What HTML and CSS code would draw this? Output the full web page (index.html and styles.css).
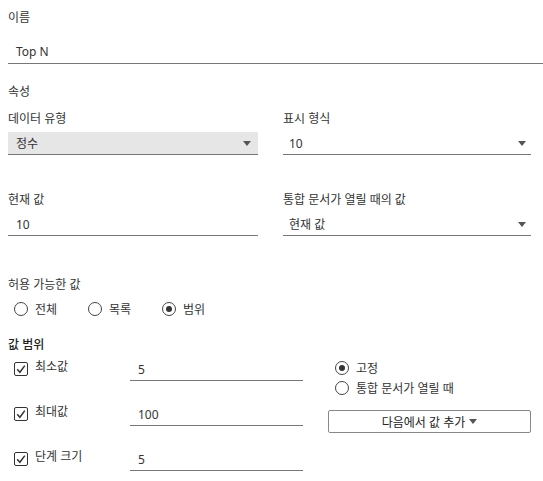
FILE: index.html
```html
<!DOCTYPE html>
<html lang="ko">
<head>
<meta charset="utf-8">
<link rel="stylesheet" href="styles.css">
</head>
<body>
<div class="page">
  <div class="label">이름</div>
  <div class="name-field">Top N</div>

  <div class="label heading">속성</div>
  <div class="grid2 row1">
    <div class="col">
      <div class="label">데이터 유형</div>
      <div class="select grey"><span>정수</span><i class="caret"></i></div>
    </div>
    <div class="col">
      <div class="label">표시 형식</div>
      <div class="select right"><span>10</span><i class="caret"></i></div>
    </div>
  </div>
  <div class="grid2 row2">
    <div class="col">
      <div class="label">현재 값</div>
      <div class="select"><span>10</span></div>
    </div>
    <div class="col">
      <div class="label">통합 문서가 열릴 때의 값</div>
      <div class="select right"><span>현재 값</span><i class="caret"></i></div>
    </div>
  </div>

  <div class="label allowed">허용 가능한 값</div>
  <div class="radios">
    <div class="radio-item"><span class="radio"></span><span>전체</span></div>
    <div class="radio-item"><span class="radio"></span><span>목록</span></div>
    <div class="radio-item"><span class="radio on"></span><span>범위</span></div>
  </div>

  <div class="label range-title">값 범위</div>
  <div class="range">
    <div class="range-left">
      <div class="range-row">
        <div class="check-label"><span class="checkbox"><svg width="14" height="14" viewBox="0 0 14 14"><path d="M3.2 7.2 L5.9 10.2 L10.8 3.6" fill="none" stroke="#333" stroke-width="1.5"/></svg></span><span>최소값</span></div>
        <div class="range-field">5</div>
      </div>
      <div class="range-row">
        <div class="check-label"><span class="checkbox"><svg width="14" height="14" viewBox="0 0 14 14"><path d="M3.2 7.2 L5.9 10.2 L10.8 3.6" fill="none" stroke="#333" stroke-width="1.5"/></svg></span><span>최대값</span></div>
        <div class="range-field">100</div>
      </div>
      <div class="range-row last">
        <div class="check-label"><span class="checkbox"><svg width="14" height="14" viewBox="0 0 14 14"><path d="M3.2 7.2 L5.9 10.2 L10.8 3.6" fill="none" stroke="#333" stroke-width="1.5"/></svg></span><span>단계 크기</span></div>
        <div class="range-field">5</div>
      </div>
    </div>
    <div class="range-right">
      <div class="radio-item small"><span class="radio on"></span><span>고정</span></div>
      <div class="radio-item small second"><span class="radio"></span><span>통합 문서가 열릴 때</span></div>
      <div class="button">다음에서 값 추가 <i class="caret inline"></i></div>
    </div>
  </div>
</div>
</body>
</html>
```

FILE: styles.css
```css
html, body {
  margin: 0;
  background: #ffffff;
}

.page {
  padding: 9px 0 0 8px;
  font-family: "Noto Sans", "Noto Sans CJK KR", sans-serif;
  font-size: 12px;
  color: #333333;
}

.label {
  height: 18px;
  line-height: 18px;
  white-space: nowrap;
}

.name-field {
  margin-top: 13px;
  height: 23px;
  line-height: 24px;
  padding-left: 8px;
  border-bottom: 1px solid #777777;
}

.heading {
  margin-top: 19px;
}

.grid2 {
  display: grid;
  grid-template-columns: 250px 248px;
  column-gap: 25px;
}

.row1 {
  margin-top: 9px;
}

.row2 {
  margin-top: 36px;
}

.select {
  margin-top: 4px;
  height: 22px;
  line-height: 23px;
  padding: 0 7px 0 8px;
  border-bottom: 1px solid #777777;
  display: flex;
  align-items: center;
  justify-content: space-between;
}

.select.right {
  padding-left: 6px;
  padding-right: 5px;
}

.select.grey {
  background: #e6e6e6;
}

.caret {
  display: inline-block;
  width: 0;
  height: 0;
  border-left: 4px solid transparent;
  border-right: 4px solid transparent;
  border-top: 5px solid #555555;
}

.caret.inline {
  margin-left: 4px;
  vertical-align: 1px;
}

.allowed {
  margin-top: 40px;
}

.radios {
  margin-top: 6px;
  display: flex;
  padding-left: 6px;
}

.radio-item {
  width: 74px;
  height: 18px;
  display: flex;
  align-items: center;
  gap: 7px;
  white-space: nowrap;
}

.radio {
  width: 12px;
  height: 12px;
  border: 1px solid #444444;
  border-radius: 50%;
  box-sizing: content-box;
  display: flex;
  align-items: center;
  justify-content: center;
  flex: none;
}

.radio.on::after {
  content: "";
  width: 6px;
  height: 6px;
  border-radius: 50%;
  background: #333333;
}

.range-title {
  margin-top: 18px;
  font-weight: 500;
  color: #222222;
}

.range {
  margin-top: 4px;
  display: flex;
  gap: 25px;
}

.range-left {
  width: 295px;
}

.range-row {
  height: 45px;
  display: flex;
  align-items: flex-start;
}

.range-row.last {
  height: 23px;
}

.check-label {
  width: 116px;
  padding-left: 6px;
  height: 18px;
  display: flex;
  align-items: flex-start;
  gap: 7px;
  line-height: 18px;
  white-space: nowrap;
}

.checkbox {
  margin-top: 4px;
  width: 14px;
  height: 14px;
  border: 1px solid #333333;
  border-radius: 2px;
  box-sizing: border-box;
  display: flex;
  align-items: center;
  justify-content: center;
  flex: none;
}

.checkbox svg {
  display: block;
  flex: none;
}

.range-field {
  width: 165px;
  height: 22px;
  line-height: 23px;
  padding-left: 8px;
  border-bottom: 1px solid #777777;
}

.range-right {
  width: 203px;
  padding-top: 1px;
}

.radio-item.small {
  width: auto;
  padding-left: 7px;
}

.radio-item.second {
  margin-top: 2px;
}

.button {
  margin-top: 13px;
  height: 23px;
  box-sizing: border-box;
  border: 1px solid #888888;
  border-radius: 2px;
  display: flex;
  align-items: center;
  justify-content: center;
  white-space: nowrap;
  color: #222222;
}
```
